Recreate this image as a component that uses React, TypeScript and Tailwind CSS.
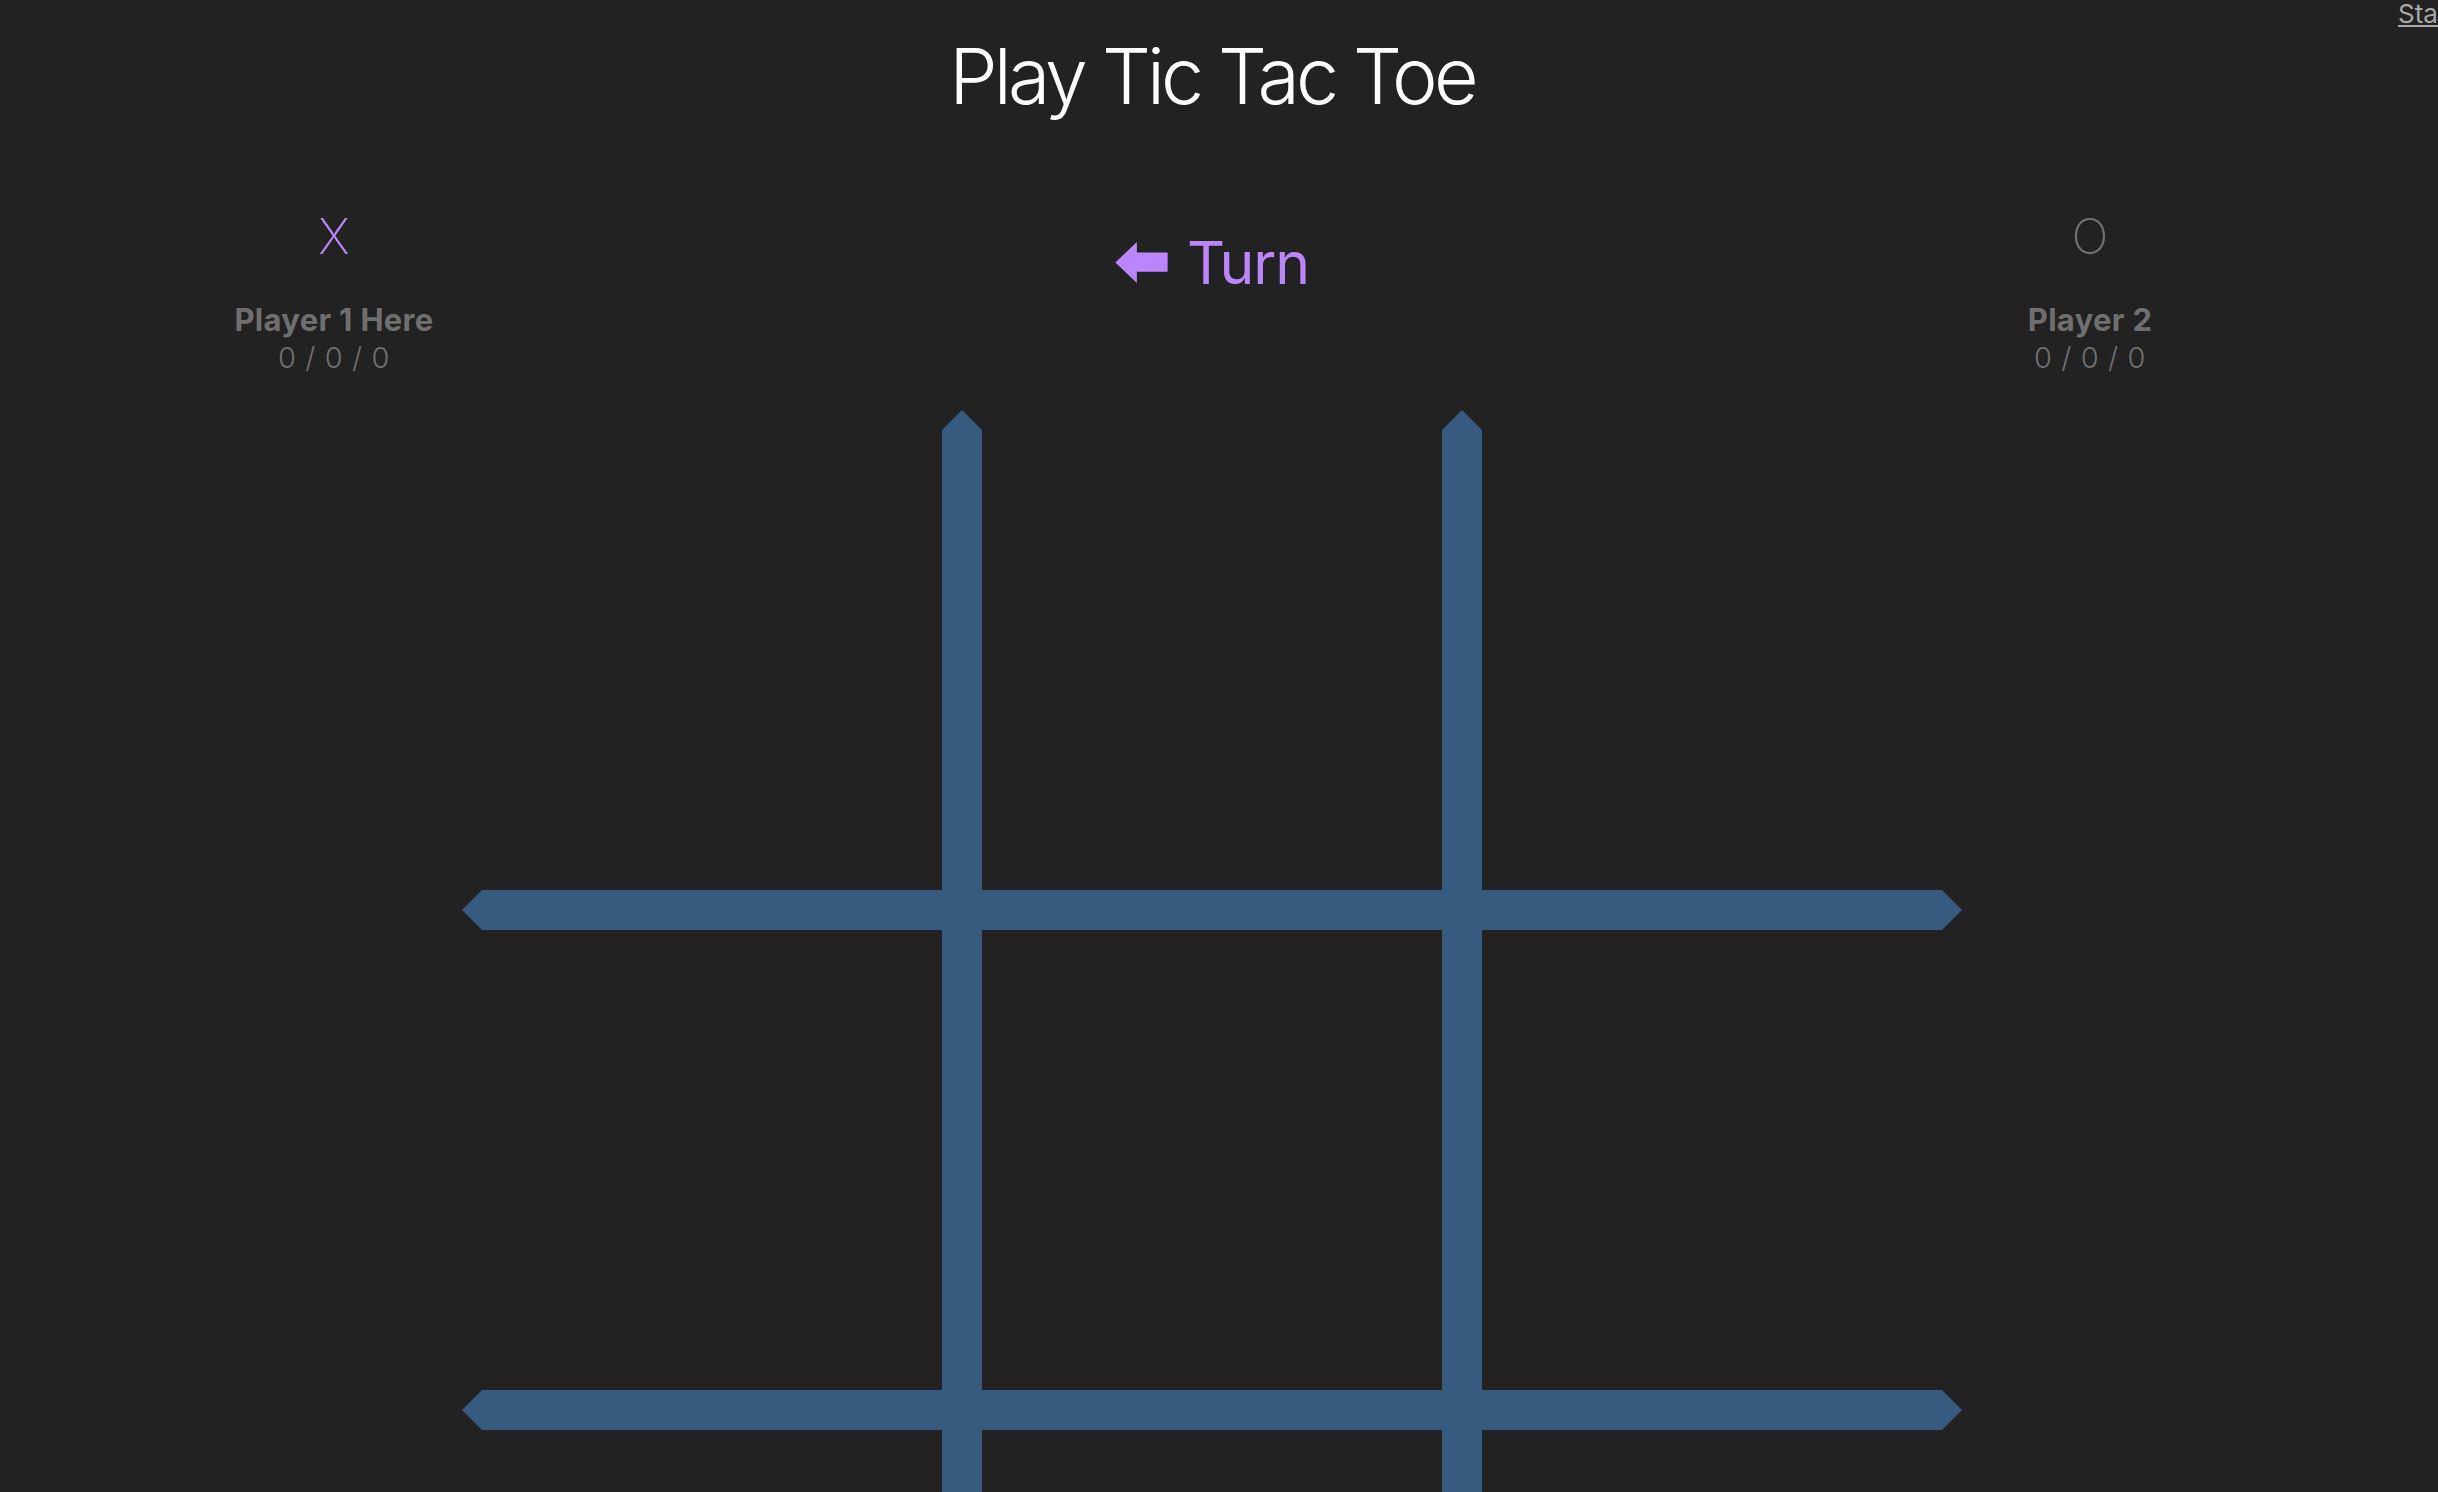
import React, { useState } from 'react';

type Cell = 'X' | 'O' | null;

const BOARD = 1500;
const LINE = 40;

// pointed bar, like the original board graphics
const barPoints = (pos: number, vertical: boolean) => {
  const h = LINE / 2;
  const pts = vertical
    ? [
        [pos, 0],
        [pos + h, h],
        [pos + h, BOARD - h],
        [pos, BOARD],
        [pos - h, BOARD - h],
        [pos - h, h],
      ]
    : [
        [0, pos],
        [h, pos - h],
        [BOARD - h, pos - h],
        [BOARD, pos],
        [BOARD - h, pos + h],
        [h, pos + h],
      ];
  return pts.map((p) => p.join(',')).join(' ');
};

const ArrowLeft = () => (
  <svg width="53" height="41" viewBox="0 0 158 124" className="shrink-0">
    <polygon points="0,62 65,0 65,32 158,32 158,90 65,90 65,124" fill="#bb86fc" />
  </svg>
);

const PlayerCard = ({
  mark,
  name,
  score,
  active,
}: {
  mark: string;
  name: string;
  score: string;
  active: boolean;
}) => (
  <div className="flex flex-col items-center">
    <span
      className={`text-[49px] font-extralight leading-none ${active ? 'text-[#bb86fc]' : 'text-[#6f6f6f]'}`}
    >
      {mark}
    </span>
    <span className="mt-[43px] text-[31px] font-bold leading-none tracking-[0.01em] text-[#6f6f6f]">
      {name}
    </span>
    <span className="mt-[8px] text-[29px] font-light leading-none tracking-[0.02em] text-[#6f6f6f]">
      {score}
    </span>
  </div>
);

export default function App() {
  const [cells, setCells] = useState<Cell[]>(Array(9).fill(null));
  const [turn, setTurn] = useState<'X' | 'O'>('X');

  const play = (i: number) => {
    if (cells[i]) return;
    const next = [...cells];
    next[i] = turn;
    setCells(next);
    setTurn(turn === 'X' ? 'O' : 'X');
  };

  return (
    <div
      className="relative min-h-screen overflow-hidden bg-[#222222] text-white"
      style={{ fontFamily: 'Inter, "Noto Sans", sans-serif' }}
    >
      <a
        href="#stats"
        className="absolute left-[2398px] top-0 whitespace-nowrap text-[26px] leading-[28px] text-[#a8a8a8] underline"
      >
        Stats
      </a>

      <div className="w-[2424px]">
        <h1 className="pt-[38px] text-center text-[77px] font-light leading-none tracking-[-0.05em]">
          Play Tic Tac Toe
        </h1>

        <div className="mt-[97px] grid grid-cols-[668px_1fr_668px] items-start">
          <PlayerCard mark="X" name="Player 1 Here" score="0 / 0 / 0" active={turn === 'X'} />

          <div className="mt-[21px] flex items-center justify-center gap-[19px] text-[#bb86fc]">
            {turn === 'X' ? <ArrowLeft /> : null}
            <span className="text-[59px] leading-none tracking-[-0.02em]">Turn</span>
          </div>

          <PlayerCard mark="O" name="Player 2" score="0 / 0 / 0" active={turn === 'O'} />
        </div>

        <div className="relative mx-auto mt-[38px] h-[1500px] w-[1500px]">
          <svg
            className="pointer-events-none absolute inset-0"
            width={BOARD}
            height={BOARD}
            viewBox={`0 0 ${BOARD} ${BOARD}`}
          >
            {[500, 1000].map((p) => (
              <React.Fragment key={p}>
                <polygon points={barPoints(p, true)} fill="#375a7f" />
                <polygon points={barPoints(p, false)} fill="#375a7f" />
              </React.Fragment>
            ))}
          </svg>
          <div className="grid h-full w-full grid-cols-3 grid-rows-3">
            {cells.map((c, i) => (
              <button
                key={i}
                onClick={() => play(i)}
                className="flex items-center justify-center text-[200px] font-light text-[#bb86fc]"
              >
                {c}
              </button>
            ))}
          </div>
        </div>
      </div>
    </div>
  );
}
